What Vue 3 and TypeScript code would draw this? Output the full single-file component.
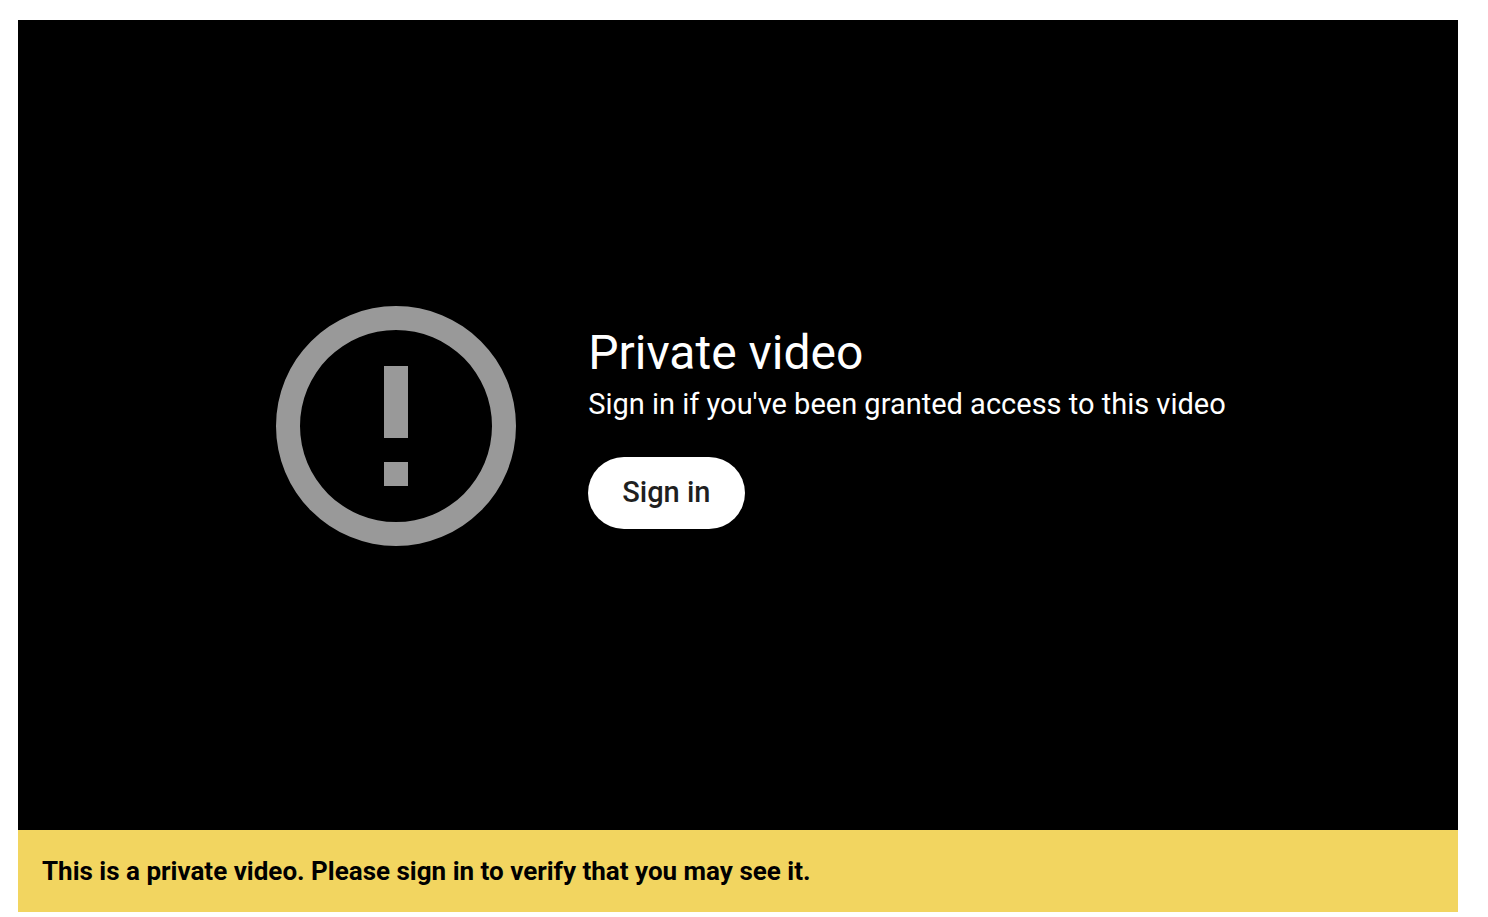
<script setup lang="ts">
const title: string = 'Private video'
const reason: string = "Sign in if you've been granted access to this video"
const notice: string = 'This is a private video. Please sign in to verify that you may see it.'
</script>

<template>
  <main class="page">
    <section class="player">
      <div class="message">
        <svg class="alert" viewBox="0 0 24 24" aria-hidden="true">
          <path d="M11 7h2v6h-2zM11 15h2v2h-2zM12 2a10 10 0 1 0 0 20a10 10 0 0 0 0-20zM12 20a8 8 0 1 1 0-16a8 8 0 0 1 0 16z" />
        </svg>
        <div class="details">
          <h1 class="title">{{ title }}</h1>
          <p class="reason">{{ reason }}</p>
          <button class="sign-in" type="button">Sign in</button>
        </div>
      </div>
    </section>
    <p class="notice">{{ notice }}</p>
  </main>
</template>

<style>
body {
  margin: 0;
  background: #fff;
}
</style>

<style scoped>
.page {
  padding: 20px 30px 5px 18px;
  font-family: Roboto, Arial, sans-serif;
}
.player {
  display: flex;
  align-items: center;
  justify-content: center;
  box-sizing: border-box;
  padding: 2px 0 0 2px;
  aspect-ratio: 16 / 9;
  background: #000;
  color: #fff;
}
.message {
  display: flex;
  align-items: center;
  gap: 48px;
}
.alert {
  flex: none;
  width: 288px;
  height: 288px;
  fill: #999;
}
.title {
  margin: 0;
  font-size: 48px;
  font-weight: 400;
  line-height: 60px;
}
.reason {
  margin: 0;
  font-size: 29px;
  line-height: 42px;
}
.sign-in {
  display: block;
  height: 72px;
  margin: 32px 0 0;
  padding: 0 34px 2px;
  border: 0;
  border-radius: 36px;
  background: #fff;
  color: #1f1f1f;
  font-family: inherit;
  font-size: 29px;
  font-weight: 500;
  cursor: pointer;
}
.notice {
  margin: 0;
  padding: 24px;
  background: #f2d560;
  color: #000;
  font-size: 26px;
  font-weight: 700;
  line-height: 34px;
}
</style>
